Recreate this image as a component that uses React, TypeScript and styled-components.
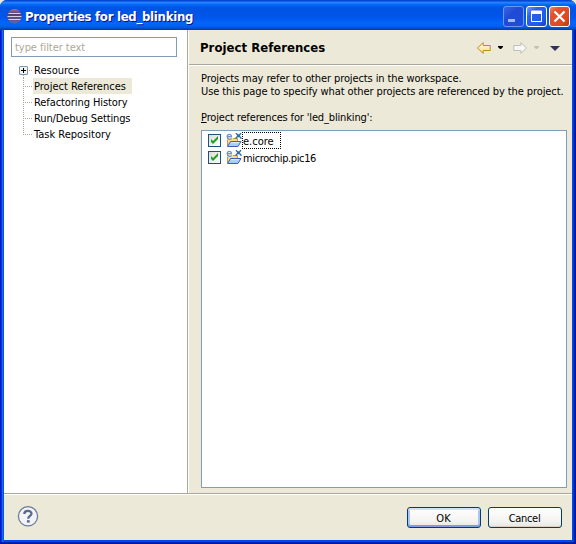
import React from "react";
import styled, { createGlobalStyle } from "styled-components";

const Global = createGlobalStyle`
  *{box-sizing:border-box}
  html,body{margin:0;padding:0;background:#ece9d8;overflow:hidden}
  body,button{font-family:"DejaVu Sans Condensed","DejaVu Sans",Tahoma,sans-serif;font-size:11px;line-height:13px;color:#000}
`;

/* Text run with its own tracking */
const T = styled.span<{ $ls?: number }>`
  display: inline-block;
  white-space: pre;
  letter-spacing: ${p => p.$ls ?? 0}px;
`;

const Win = styled.div`
  width: 576px;
  height: 544px;
  display: flex;
  flex-direction: column;
  background: linear-gradient(90deg, #0019cf 0 1px, #0831d9 1px 2px, #166aee 2px 3px, #0855dd 3px 4px, #0047f0 4px 573px, #003de0 573px 574px, #0020b4 574px 575px, #001590 575px);
  border-radius: 7px 7px 0 0;
  box-shadow: inset 0 -1px #001590, inset 0 -2px #0020b4;
`;
const TitleBar = styled.header`
  height: 30px;
  flex: none;
  display: flex;
  align-items: center;
  padding: 3px 6px 0 7px;
  border-radius: 7px 7px 0 0;
  background: linear-gradient(#0040cc 0, #0855dd 4%, #2a82ff 8%, #1a78ff 11%, #036ffc 14%, #0262ee 18%, #0057e5 24%, #0054e3 30%, #0055eb 56%, #005bf5 66%, #0266fa 76%, #0060ef 88%, #0052d6 93%, #0044b8 97%, #003aa5 100%);
`;
const Title = styled.h1`
  flex: 1;
  margin: 1px 0 0 2px;
  font: bold 13px/16px "DejaVu Sans Condensed", "DejaVu Sans", sans-serif;
  color: #fff;
  text-shadow: 1px 1px #0f1089;
`;
const Controls = styled.div`
  display: flex;
  gap: 2px;
`;
const Control = styled.button<{ $kind: "min" | "max" | "close" }>`
  width: 21px;
  height: 21px;
  padding: 0;
  border: 1px solid ${p => (p.$kind === "min" ? "#7394ee" : "#fff")};
  border-radius: 3px;
  background: ${p =>
    p.$kind === "close"
      ? "linear-gradient(135deg, #f08a68 0, #e4512c 25%, #dd4a20 75%, #b83610 100%)"
      : p.$kind === "min"
        ? "linear-gradient(135deg, #3a66e0, #1f4ad6 40%, #1d4edc)"
        : "linear-gradient(135deg, #6f9bf8 0, #2a62e8 30%, #1f5ae6 75%, #0b3fc8 100%)"};
  svg {
    display: block;
  }
`;
const Client = styled.div`
  flex: 1;
  display: flex;
  flex-direction: column;
  margin: 0 4px 4px;
  background: #ece9d8;
  min-height: 0;
`;
const Main = styled.div`
  height: 463px;
  display: flex;
`;
const Nav = styled.nav`
  width: 185px;
  flex: none;
  background: #fff;
  border-right: 1px solid #fff;
  box-shadow: inset -1px 0 #aca899;
  padding: 7px;
`;
const Filter = styled.div`
  width: 166px;
  height: 20px;
  border: 1px solid #7f9db9;
  padding: 3px;
  color: #aca899;
`;
const Tree = styled.ul`
  list-style: none;
  margin: 5px 0 0 8px;
  padding: 0;
`;
const Node = styled.li`
  height: 16px;
  display: flex;
`;
const NodeLabel = styled.div<{ $sel?: boolean }>`
  height: 16px;
  width: 99px;
  padding: 2px 0 0 1px;
  background: ${p => (p.$sel ? "#ece9d8" : "transparent")};
`;
const Page = styled.section`
  flex: 1;
  min-width: 0;
  display: flex;
  flex-direction: column;
`;
const Head = styled.div`
  height: 36px;
  display: flex;
  align-items: flex-start;
  justify-content: space-between;
  padding: 10px 10px 0 11px;
  border-bottom: 1px solid #fff;
  box-shadow: inset 0 -1px #aca899;
  svg {
    margin-top: 2px;
  }
`;
const H2 = styled.h2`
  margin: 0;
  font: bold 13px/16px "DejaVu Sans Condensed", "DejaVu Sans", sans-serif;
`;
const Body = styled.div`
  padding: 6px 5px 0 12px;
`;
const Line = styled.div`
  height: 13px;
`;
const ListLabel = styled.div`
  height: 13px;
  margin: 13px 0 6px;
`;
const List = styled.div`
  width: 366px;
  height: 358px;
  border: 1px solid #7f9db9;
  background: #fff;
  padding: 1px 0 0 6px;
`;
const Item = styled.div`
  height: 17px;
  display: flex;
  align-items: center;
`;
const Check = styled.span`
  width: 13px;
  height: 13px;
  margin: 0 4px 0 0;
  border: 1px solid #1c5180;
  background: linear-gradient(135deg, #dcdcd7, #fff);
  svg {
    display: block;
  }
`;
const ItemText = styled.span<{ $focus?: boolean }>`
  height: 17px;
  width: ${p => (p.$focus ? "39px" : "auto")};
  padding: 2px 0 0 0;
  border: 1px dotted ${p => (p.$focus ? "#000" : "transparent")};
`;
const Footer = styled.footer`
  flex: 1;
  border-top: 1px solid #aca899;
  box-shadow: inset 0 1px #fff;
  display: flex;
  align-items: flex-start;
  padding: 12px 10px 0 13px;
  gap: 7px;
`;
const Spacer = styled.div`
  flex: 1;
`;
const Btn = styled.button<{ $def?: boolean }>`
  width: 74px;
  height: 21px;
  margin-top: 1px;
  padding: 2px 1px 0 0;
  border: 1px solid #003c74;
  border-radius: 3px;
  background: linear-gradient(#fff, #f4f3ee 70%, #e9e6dc);
  box-shadow: ${p =>
    p.$def
      ? "inset 0 2px #cee3ff, inset 0 -2px #7f9be8, inset 2px 0 #aac4f4, inset -2px 0 #aac4f4"
      : "inset 0 -1px #d6d0c5"};
`;

const Eclipse = () => (
  <svg width="16" height="16" viewBox="0 0 16 16">
    <defs>
      <linearGradient id="orb" x1="0" y1="0" x2="0" y2="1">
        <stop offset="0" stopColor="#a86f95" />
        <stop offset=".35" stopColor="#4f3f78" />
        <stop offset="1" stopColor="#6d62a8" />
      </linearGradient>
    </defs>
    <circle cx="7.5" cy="7.200" r="7.200" fill="url(#orb)" />
    <path d="M1.500 4.500H13.500M.5 7.500H14.500M1.500 10.500H13.500" stroke="#d9cfe6" />
  </svg>
);
const MinGlyph = () => (
  <svg width="19" height="19">
    <rect x="4" y="12" width="7" height="3" fill="#a5baf5" />
  </svg>
);
const MaxGlyph = () => (
  <svg width="19" height="19">
    <path d="M4.500 4H14.500V14.500H4.500Z" fill="none" stroke="#fff" />
    <rect x="4" y="4" width="11" height="3" fill="#fff" />
  </svg>
);
const CloseGlyph = () => (
  <svg width="19" height="19">
    <path d="M4.500 4.500L14.500 14.500M14.500 4.500L4.500 14.500" stroke="#fff" strokeWidth="2.300" />
  </svg>
);
const arrow = "M.7 6L6.500.7V3.500H13.500V8.500H6.500V11.300Z";
const NavIcons = () => (
  <svg width="86" height="12" viewBox="0 0 86 12">
    <defs>
      <linearGradient id="gold" x1="0" y1="0" x2="0" y2="1">
        <stop offset="0" stopColor="#fffbe6" />
        <stop offset="1" stopColor="#ffdc80" />
      </linearGradient>
    </defs>
    <path d={arrow} transform="translate(.7 0)" fill="url(#gold)" stroke="#c08a20" />
    <path d={arrow} transform="translate(51.300 0) scale(-1 1)" fill="#f7f7f5" stroke="#bfbfba" />
    <path d="M22 4h5v1l-2 2h-1l-2-2z" fill="#000" />
    <path d="M58 4h5v1l-2 2h-1l-2-2z" fill="#c5c2b4" />
    <path d="M74 4h10l-5 5z" fill="#34315f" />
  </svg>
);
const Folder = () => (
  <svg width="17" height="16" viewBox="0 0 17 16">
    <path d="M2.500 13V4.500H7L8 5.500H12.500V9" fill="#fbd98a" stroke="#d8963a" />
    <path d="M2.500 13.500L5.500 8.500H16L13 13.500Z" fill="#a4cdf8" stroke="#3c62b5" />
    <path d="M6 9.700H14" stroke="#e0f0ff" />
    <circle cx="4.500" cy="3.700" r="3.600" fill="#fff" fillOpacity=".7" />
    <path d="M2.500 3.700H6.500C6.500.6 2.200.6 2.200 3.800C2.200 6.800 5.700 6.800 6.600 5.400" fill="none" stroke="#7593c4" strokeWidth="1.300" />
    <path d="M11 0L12.500 2H14.500L16 0M11 6V5L12.500 3.500H14.500L16 5V6" fill="none" stroke="#2f6f9f" strokeWidth="1.300" />
  </svg>
);
const Branch = ({ kind }: { kind: "root" | "mid" | "last" }) => (
  <svg width="14" height="16" viewBox="0 0 14 16">
    <path
      d={kind === "root" ? "M4.500 13V16M10 8.500H13" : kind === "last" ? "M4.500 0V8M4 8.500H13" : "M4.500 0V16M6 8.500H13"}
      stroke="#aca899"
      strokeDasharray="1 1"
      fill="none"
    />
    {kind === "root" && (
      <>
        <rect x=".5" y="4.500" width="8" height="8" rx=".5" fill="#f2f1ea" stroke="#7b96b5" />
        <path d="M2 8.500H7M4.500 6V11" stroke="#000" />
      </>
    )}
  </svg>
);
const Help = () => (
  <svg width="22" height="22" viewBox="0 0 22 22">
    <circle cx="11" cy="10.300" r="9.600" fill="#f3f3f5" stroke="#6a7d9d" strokeWidth="1.300" />
    <path d="M7.300 8C7.300 3.800 14.700 4 14.500 7.800C14.400 10 11.200 9.900 11.200 12.800" fill="none" stroke="#56698f" strokeWidth="2.300" />
    <rect x="9.900" y="14.200" width="2.800" height="2.400" fill="#56698f" />
  </svg>
);
const Tick = () => (
  <svg width="11" height="11">
    <path d="M2 4L4 6L9 1V4L4 9L2 7Z" fill="#21a121" />
  </svg>
);

const nodes: [string, number][] = [
  ["Resource", 0],
  ["Project References", 0],
  ["Refactoring History", -0.08],
  ["Run/Debug Settings", -0.12],
  ["Task Repository", 0],
];

export default function App() {
  return (
    <>
      <Global />
      <Win>
        <TitleBar>
          <Eclipse />
          <Title><T $ls={-0.27}>Properties for led_blinking</T></Title>
          <Controls>
            <Control $kind="min" aria-label="Minimize"><MinGlyph /></Control>
            <Control $kind="max" aria-label="Maximize"><MaxGlyph /></Control>
            <Control $kind="close" aria-label="Close"><CloseGlyph /></Control>
          </Controls>
        </TitleBar>
        <Client>
          <Main>
            <Nav>
              <Filter><T $ls={-0.05}>type filter text</T></Filter>
              <Tree>
                {nodes.map(([name, ls], i) => (
                  <Node key={name}>
                    <Branch kind={i === 0 ? "root" : i === nodes.length - 1 ? "last" : "mid"} />
                    <NodeLabel $sel={i === 1}><T $ls={ls}>{name}</T></NodeLabel>
                  </Node>
                ))}
              </Tree>
            </Nav>
            <Page>
              <Head>
                <H2><T $ls={0.03}>Project References</T></H2>
                <NavIcons />
              </Head>
              <Body>
                <Line><T $ls={-0.11}>Projects may refer to other projects in the workspace.</T></Line>
                <Line><T $ls={-0.09}>Use this page to specify what other projects are referenced by the project.</T></Line>
                <ListLabel><T $ls={-0.15}><u>P</u>roject references for 'led_blinking':</T></ListLabel>
                <List>
                  <Item><Check><Tick /></Check><Folder /><ItemText $focus><T>e.core</T></ItemText></Item>
                  <Item><Check><Tick /></Check><Folder /><ItemText><T $ls={-0.38}>microchip.pic16</T></ItemText></Item>
                </List>
              </Body>
            </Page>
          </Main>
          <Footer>
            <Help />
            <Spacer />
            <Btn $def><T>OK</T></Btn>
            <Btn><T $ls={-0.3}>Cancel</T></Btn>
          </Footer>
        </Client>
      </Win>
    </>
  );
}
